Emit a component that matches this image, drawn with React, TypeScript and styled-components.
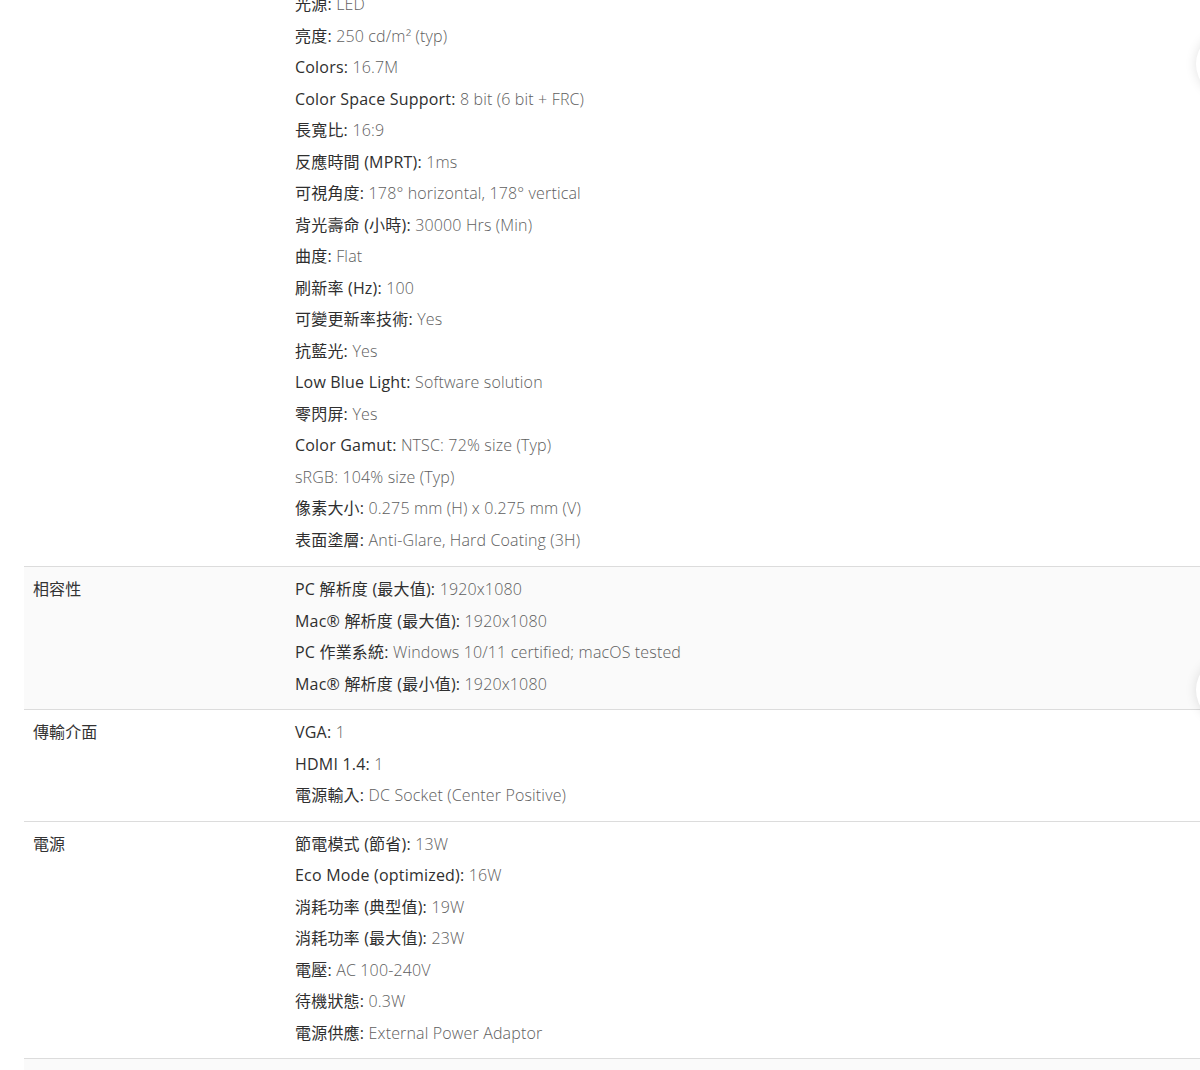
import React from "react";
import styled, { createGlobalStyle } from "styled-components";

type Spec = { k?: string; v: string };

interface rowData {
  title: string;
  items: Spec[];
  shade?: boolean;
}

const rows: rowData[] = [
  {
    title: "",
    items: [
      { k: "光源", v: "LED" },
      { k: "亮度", v: "250 cd/m² (typ)" },
      { k: "Colors", v: "16.7M" },
      { k: "Color Space Support", v: "8 bit (6 bit + FRC)" },
      { k: "長寬比", v: "16:9" },
      { k: "反應時間 (MPRT)", v: "1ms" },
      { k: "可視角度", v: "178° horizontal, 178° vertical" },
      { k: "背光壽命 (小時)", v: "30000 Hrs (Min)" },
      { k: "曲度", v: "Flat" },
      { k: "刷新率 (Hz)", v: "100" },
      { k: "可變更新率技術", v: "Yes" },
      { k: "抗藍光", v: "Yes" },
      { k: "Low Blue Light", v: "Software solution" },
      { k: "零閃屏", v: "Yes" },
      { k: "Color Gamut", v: "NTSC: 72% size (Typ)" },
      { v: "sRGB: 104% size (Typ)" },
      { k: "像素大小", v: "0.275 mm (H) x 0.275 mm (V)" },
      { k: "表面塗層", v: "Anti-Glare, Hard Coating (3H)" },
    ],
  },
  {
    title: "相容性",
    shade: true,
    items: [
      { k: "PC 解析度 (最大值)", v: "1920x1080" },
      { k: "Mac® 解析度 (最大值)", v: "1920x1080" },
      { k: "PC 作業系統", v: "Windows 10/11 certified; macOS tested" },
      { k: "Mac® 解析度 (最小值)", v: "1920x1080" },
    ],
  },
  {
    title: "傳輸介面",
    items: [
      { k: "VGA", v: "1" },
      { k: "HDMI 1.4", v: "1" },
      { k: "電源輸入", v: "DC Socket (Center Positive)" },
    ],
  },
  {
    title: "電源",
    items: [
      { k: "節電模式 (節省)", v: "13W" },
      { k: "Eco Mode (optimized)", v: "16W" },
      { k: "消耗功率 (典型值)", v: "19W" },
      { k: "消耗功率 (最大值)", v: "23W" },
      { k: "電壓", v: "AC 100-240V" },
      { k: "待機狀態", v: "0.3W" },
      { k: "電源供應", v: "External Power Adaptor" },
    ],
  },
  { title: "", shade: true, items: [{ v: "" }] },
];

const GlobalStyle = createGlobalStyle`
  html, body {
    margin: 0;
    padding: 0;
    background: #fff;
    overflow: hidden;
  }
  body {
    font-family: "Open Sans", "Noto Sans CJK TC", sans-serif;
    font-size: 16px;
    color: #333;
  }
`;

const SpecTable: React.FC = () => {
  return (
    <Page>
      <GlobalStyle />
      <Table>
        {rows.map((r, i) => (
          <Row key={i} $shade={r.shade}>
            <Title>{r.title}</Title>
            <Values>
              {r.items.map((it, j) => (
                <Line key={j}>
                  {it.k && <Key>{it.k}: </Key>}
                  <Val>{it.v}</Val>
                </Line>
              ))}
            </Values>
          </Row>
        ))}
      </Table>
      <SideBtn $top={32} />
      <SideBtn $top={658} />
    </Page>
  );
};

export default SpecTable;

const Page = styled.div`
  position: relative;
  width: 1200px;
  height: 1070px;
  overflow: hidden;
`;

const Table = styled.div`
  margin: -18px 0 0 24px;
  display: flex;
  flex-direction: column;
`;

const Row = styled.div<{ $shade?: boolean }>`
  display: grid;
  grid-template-columns: 271px 1fr;
  padding: 7px 0 9px;
  border-bottom: 1px solid #dcdcdc;
  background: ${(p) => (p.$shade ? "#fafafa" : "#fff")};
  &:first-child {
    padding-bottom: 10px;
  }
`;

const Title = styled.div`
  padding-left: 9px;
  line-height: 31.5px;
  color: #333;
  letter-spacing: 0.1px;
`;

const Values = styled.div`
  display: flex;
  flex-direction: column;
`;

const Line = styled.div`
  height: 31.5px;
  line-height: 31.5px;
  white-space: nowrap;
`;

const Key = styled.span`
  color: #2f2f2f;
  font-weight: 400;
  letter-spacing: 0.2px;
`;

const Val = styled.span`
  color: #5e5e5e;
  font-weight: 300;
  letter-spacing: 0.15px;
`;

const SideBtn = styled.div<{ $top: number }>`
  position: absolute;
  left: 1196px;
  top: ${(p) => p.$top}px;
  width: 64px;
  height: 64px;
  border-radius: 50%;
  background: #fff;
  box-shadow: 0 0 12px rgba(0, 0, 0, 0.12);
`;
